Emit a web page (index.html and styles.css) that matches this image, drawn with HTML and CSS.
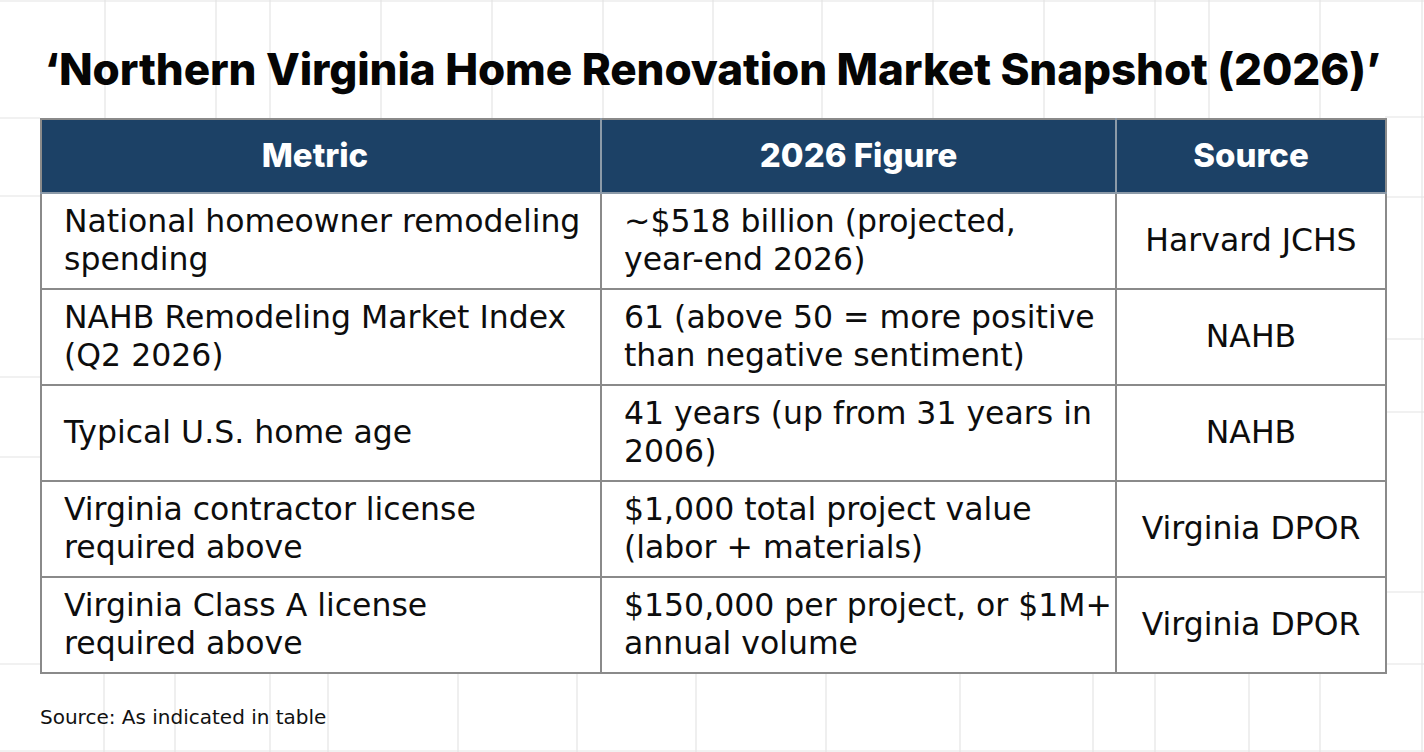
FILE: index.html
```html
<!DOCTYPE html>
<html lang="en">
<head>
<meta charset="utf-8">
<title>Northern Virginia Home Renovation Market Snapshot (2026)</title>
<link rel="stylesheet" href="styles.css">
</head>
<body>
<svg class="grid" width="1424" height="752" viewBox="0 0 1424 752" aria-hidden="true">
  <g stroke="#e4e4e4" stroke-width="1.2" fill="none">
    <line x1="0" y1="1" x2="1424" y2="1"/>
    <line x1="0" y1="751" x2="1424" y2="751"/>
    <line x1="105" y1="0" x2="105" y2="118"/>
    <line x1="216" y1="0" x2="216" y2="118"/>
    <line x1="270" y1="0" x2="270" y2="118"/>
    <line x1="381" y1="0" x2="381" y2="118"/>
    <line x1="492" y1="0" x2="492" y2="118"/>
    <line x1="603" y1="0" x2="603" y2="118"/>
    <line x1="713" y1="0" x2="713" y2="118"/>
    <line x1="822" y1="0" x2="822" y2="118"/>
    <line x1="933" y1="0" x2="933" y2="118"/>
    <line x1="1044" y1="0" x2="1044" y2="118"/>
    <line x1="1155" y1="0" x2="1155" y2="118"/>
    <line x1="1209" y1="0" x2="1209" y2="118"/>
    <line x1="1320" y1="0" x2="1320" y2="118"/>
    <line x1="1422" y1="0" x2="1422" y2="752"/>
    <line x1="104" y1="672" x2="104" y2="752"/>
    <line x1="175" y1="672" x2="175" y2="752"/>
    <line x1="270" y1="672" x2="270" y2="752"/>
    <line x1="328" y1="672" x2="328" y2="752"/>
    <line x1="458" y1="672" x2="458" y2="752"/>
    <line x1="577" y1="672" x2="577" y2="752"/>
    <line x1="696" y1="672" x2="696" y2="752"/>
    <line x1="826" y1="672" x2="826" y2="752"/>
    <line x1="960" y1="672" x2="960" y2="752"/>
    <line x1="1093" y1="672" x2="1093" y2="752"/>
    <line x1="1155" y1="672" x2="1155" y2="752"/>
    <line x1="1249" y1="672" x2="1249" y2="752"/>
    <line x1="1320" y1="672" x2="1320" y2="752"/>
    <line x1="0" y1="118" x2="40" y2="118"/>
    <line x1="0" y1="196" x2="40" y2="196"/>
    <line x1="0" y1="377" x2="40" y2="377"/>
    <line x1="0" y1="457" x2="40" y2="457"/>
    <line x1="0" y1="664" x2="40" y2="664"/>
    <line x1="1385" y1="117" x2="1424" y2="117"/>
    <line x1="1385" y1="197" x2="1424" y2="197"/>
    <line x1="1385" y1="339" x2="1424" y2="339"/>
    <line x1="1385" y1="412" x2="1424" y2="412"/>
    <line x1="1385" y1="592" x2="1424" y2="592"/>
    <line x1="1385" y1="664" x2="1424" y2="664"/>
  </g>
</svg>
<main class="page">
  <h1 class="title">‘Northern Virginia Home Renovation Market Snapshot (2026)’</h1>
  <table class="snapshot">
    <colgroup>
      <col class="c-metric">
      <col class="c-figure">
      <col class="c-source">
    </colgroup>
    <thead>
      <tr>
        <th class="h-metric">Metric</th>
        <th>2026 Figure</th>
        <th>Source</th>
      </tr>
    </thead>
    <tbody>
      <tr>
        <td>National homeowner remodeling<br>spending</td>
        <td>~$518 billion (projected,<br>year-end 2026)</td>
        <td class="src">Harvard JCHS</td>
      </tr>
      <tr>
        <td>NAHB Remodeling Market Index<br>(Q2 2026)</td>
        <td>61 (above 50 = more positive<br>than negative sentiment)</td>
        <td class="src">NAHB</td>
      </tr>
      <tr>
        <td>Typical U.S. home age</td>
        <td>41 years (up from 31 years in<br>2006)</td>
        <td class="src">NAHB</td>
      </tr>
      <tr>
        <td>Virginia contractor license<br>required above</td>
        <td>$1,000 total project value<br>(labor + materials)</td>
        <td class="src">Virginia DPOR</td>
      </tr>
      <tr>
        <td>Virginia Class A license<br>required above</td>
        <td>$150,000 per project, or $1M+<br>annual volume</td>
        <td class="src">Virginia DPOR</td>
      </tr>
    </tbody>
  </table>
  <p class="note">Source: As indicated in table</p>
</main>
</body>
</html>
```

FILE: styles.css
```css
* { box-sizing: border-box; }

html, body {
  margin: 0;
  padding: 0;
}

body {
  width: 1424px;
  height: 752px;
  overflow: hidden;
  background: #ffffff;
  position: relative;
  color: #111111;
  font-family: "DejaVu Sans", "Noto Sans", sans-serif;
}

.grid {
  position: absolute;
  left: 0;
  top: 0;
  z-index: 0;
}

.page {
  position: relative;
  z-index: 1;
  padding: 39px 0 0 40px;
  display: flex;
  flex-direction: column;
  align-items: flex-start;
}

.title {
  width: 1345px;
  margin: 0 0 19px 0;
  font-family: "Inter", "Liberation Sans", sans-serif;
  font-weight: 800;
  font-size: 44px;
  line-height: 60px;
  letter-spacing: -0.1px;
  text-align: center;
  color: #050505;
  white-space: nowrap;
}

.snapshot {
  width: 1345px;
  border-collapse: collapse;
  table-layout: fixed;
  background: #ffffff;
}

.c-metric { width: 560px; }
.c-figure { width: 515px; }
.c-source { width: 270px; }

.snapshot th {
  height: 74px;
  background: #1c4166;
  color: #ffffff;
  font-family: "Inter", "Liberation Sans", sans-serif;
  font-weight: 800;
  font-size: 33px;
  text-align: center;
  vertical-align: middle;
  border: 2px solid #8c9aa8;
  border-top-color: #8a8a8a;
  padding: 0 10px 2px;
}

.snapshot th.h-metric { padding-right: 22px; }

.snapshot thead tr th:first-child { border-left-color: #8a8a8a; }
.snapshot thead tr th:last-child { border-right-color: #8a8a8a; }

.snapshot td {
  height: 96px;
  border: 2px solid #8a8a8a;
  font-size: 31.5px;
  line-height: 38px;
  padding: 0 0 2px 22px;
  vertical-align: middle;
  white-space: nowrap;
  color: #0d0d0d;
}

.snapshot td.src {
  text-align: center;
  padding-left: 0;
}

.note {
  margin: 31px 0 0 0;
  font-size: 20px;
  line-height: 24px;
  color: #111111;
}
```
